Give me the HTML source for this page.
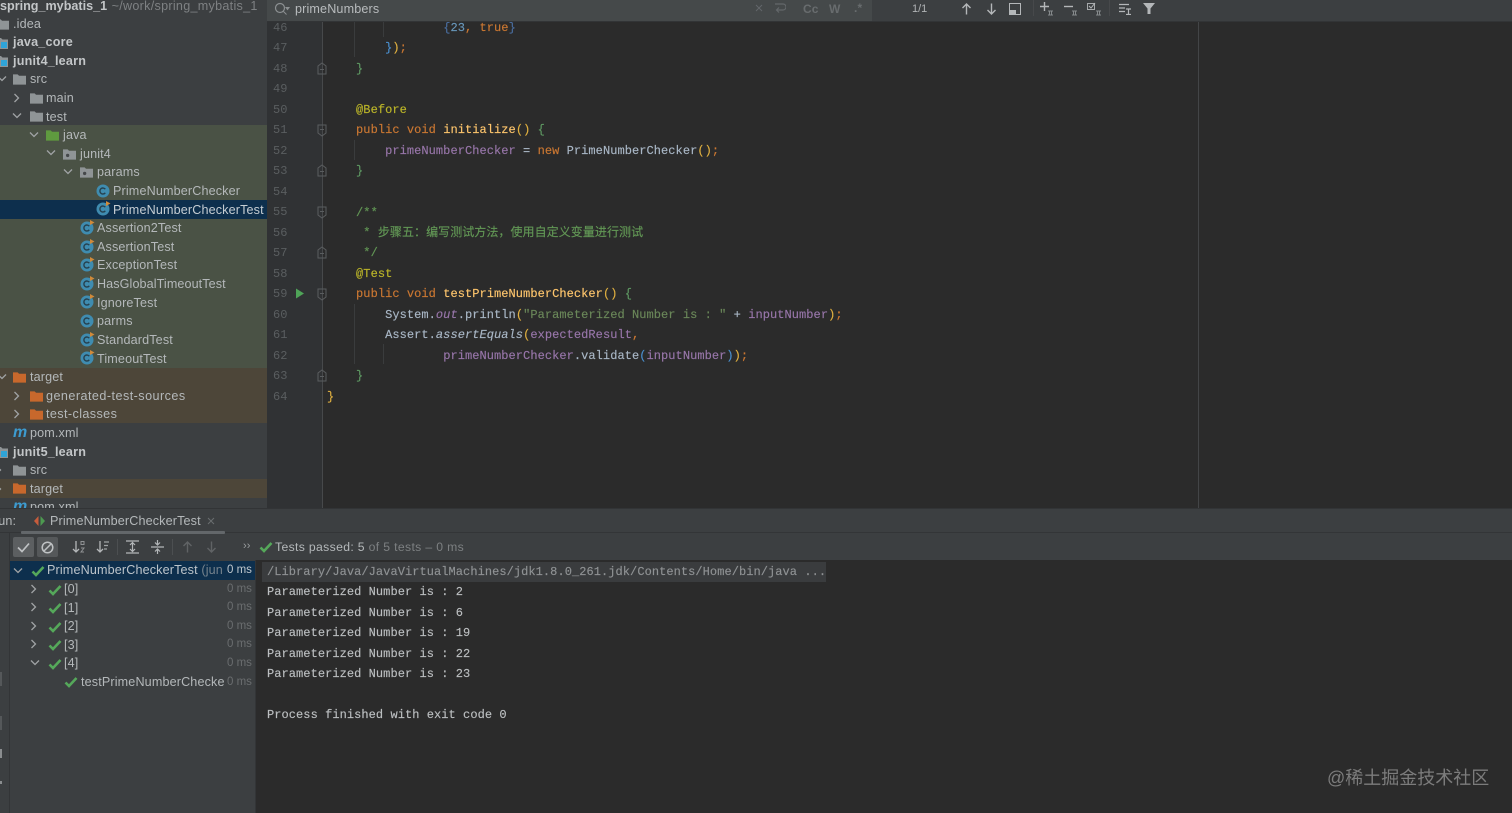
<!DOCTYPE html>
<html lang="zh">
<head>
<meta charset="utf-8">
<title>PrimeNumberCheckerTest</title>
<style>
html,body{margin:0;padding:0;background:#2b2b2b}
#p{position:relative;width:1512px;height:813px;overflow:hidden;background:#2b2b2b;font-family:"Liberation Sans","Noto Sans CJK SC",sans-serif;filter:blur(.35px)}
#p div,#p svg{position:absolute}
.b{left:0}
.t{white-space:nowrap;font-size:12.6px;letter-spacing:.14px;line-height:18px;color:#b4b8ba;height:18px}
.h{font-weight:bold;color:#c3c6c8;letter-spacing:.2px}
.g{color:#7e8183;letter-spacing:.28px}
.m{white-space:pre;font-family:"Liberation Mono","Noto Sans CJK SC",monospace;font-size:12px;letter-spacing:.06px;line-height:20px;height:20px;color:#a9b7c6;-webkit-text-stroke:.15px currentColor}
.n{font-family:"Liberation Mono",monospace;font-size:12px;line-height:20px;color:#5a5e60;left:273px}
.c{left:267px;color:#bcbfc1}
.k{color:#cc7832}.f{color:#ffc66d}.v{color:#9876aa}.a{color:#bbb529}.d{color:#629755}.s{color:#6a8759}
.gr{color:#5f9a63}.y{color:#e0b040}.bl{color:#4a90d0}.i{font-style:italic}
.ms{font-size:11.5px;line-height:18px;color:#6a6d6f;left:227px;white-space:nowrap;height:18px}
</style>
</head>
<body>
<div id="p">
<svg width="0" height="0" style="position:absolute">
<defs>
<symbol id="fo" viewBox="0 0 14 12"><path d="M0 1h5l1.500 1.500H14V12H0z" fill="currentColor"/></symbol>
<symbol id="pk" viewBox="0 0 14 12"><path d="M0 1h5l1.500 1.500H14V12H0z" fill="#8f9496"/><circle cx="5" cy="7.500" r="1.800" fill="#45484a"/></symbol>
<symbol id="mo" viewBox="0 0 16 15"><path d="M0 3h5l1.500 1.500H12V14H0z" fill="#8f9496"/><rect x="5" y="7" width="6" height="6" fill="#2fa4d8"/></symbol>
<symbol id="cl" viewBox="0 0 15 15"><circle cx="7" cy="8" r="6.500" fill="#3f8cb0"/><path d="M9.300 6.200A3 3 0 1 0 9.300 9.800" fill="none" stroke="#26404e" stroke-width="1.400"/></symbol>
<symbol id="ct" viewBox="0 0 15 15"><circle cx="7" cy="8" r="6.500" fill="#3f8cb0"/><path d="M9.300 6.200A3 3 0 1 0 9.300 9.800" fill="none" stroke="#26404e" stroke-width="1.400"/><path d="M10 0l4.500 2.500L10 5z" fill="#d08a3a"/></symbol>
<symbol id="ok" viewBox="0 0 14 12"><path d="M1.500 6.500L5 10l7.500-8" fill="none" stroke="#55a85a" stroke-width="2.600"/></symbol>
<symbol id="r" viewBox="0 0 8 10"><path d="M1.500 1l4 4-4 4" fill="none" stroke="#a0a3a5" stroke-width="1.300"/></symbol>
<symbol id="e" viewBox="0 0 10 8"><path d="M1 1.500l4 4 4-4" fill="none" stroke="#a0a3a5" stroke-width="1.300"/></symbol>
<symbol id="fe" viewBox="0 0 10 13"><path d="M1 1h8v8l-4 3-4-3z M3 5.500h4" fill="none" stroke="#5a5d5f"/></symbol>
<symbol id="fc" viewBox="0 0 10 13"><path d="M1 12h8V4L5 1 1 4z M3 7.500h4" fill="none" stroke="#5a5d5f"/></symbol>
</defs>
</svg>

<!-- sidebar -->
<div style="left:0;top:0;width:267px;height:508px;background:#3c3f41"></div>
<div style="left:0;top:125px;width:267px;height:243px;background:#4a5245"></div>
<div style="left:0;top:368px;width:267px;height:55px;background:#4d4639"></div>
<div style="left:0;top:479px;width:267px;height:19px;background:#4d4639"></div>
<div style="left:0;top:200px;width:267px;height:19px;background:#0d2f4d"></div>

<div class="t h" style="left:0;top:-3px;letter-spacing:0">spring_mybatis_1 <span class="g" style="font-weight:normal;margin-left:1px">~/work/spring_mybatis_1</span></div>
<svg style="left:-4px;top:18px;color:#8f9496" width="13" height="12"><use href="#fo"/></svg>
<div class="t" style="left:13px;top:15px">.idea</div>
<svg style="left:-4px;top:35px" width="16" height="15"><use href="#mo"/></svg>
<div class="t h" style="left:13px;top:33px">java_core</div>
<svg style="left:-4px;top:53px" width="16" height="15"><use href="#mo"/></svg>
<div class="t h" style="left:13px;top:52px">junit4_learn</div>
<svg style="left:-3px;top:75px" width="10" height="8"><use href="#e"/></svg>
<svg style="left:13px;top:73px;color:#8f9496" width="13" height="12"><use href="#fo"/></svg>
<div class="t" style="left:30px;top:70px">src</div>
<svg style="left:13px;top:93px" width="8" height="10"><use href="#r"/></svg>
<svg style="left:30px;top:92px;color:#8f9496" width="13" height="12"><use href="#fo"/></svg>
<div class="t" style="left:46px;top:89px">main</div>
<svg style="left:12px;top:112px" width="10" height="8"><use href="#e"/></svg>
<svg style="left:30px;top:110px;color:#8f9496" width="13" height="12"><use href="#fo"/></svg>
<div class="t" style="left:46px;top:108px">test</div>
<svg style="left:29px;top:131px" width="10" height="8"><use href="#e"/></svg>
<svg style="left:46px;top:129px;color:#5f9a3f" width="13" height="12"><use href="#fo"/></svg>
<div class="t" style="left:63px;top:126px">java</div>
<svg style="left:46px;top:149px" width="10" height="8"><use href="#e"/></svg>
<svg style="left:63px;top:148px" width="13" height="12"><use href="#pk"/></svg>
<div class="t" style="left:80px;top:145px">junit4</div>
<svg style="left:63px;top:168px" width="10" height="8"><use href="#e"/></svg>
<svg style="left:80px;top:166px" width="13" height="12"><use href="#pk"/></svg>
<div class="t" style="left:97px;top:163px">params</div>
<svg style="left:96px;top:183px" width="15" height="15"><use href="#cl"/></svg>
<div class="t" style="left:113px;top:182px">PrimeNumberChecker</div>
<svg style="left:96px;top:201px" width="15" height="15"><use href="#ct"/></svg>
<div class="t" style="left:113px;top:201px;color:#c5cdd3">PrimeNumberCheckerTest</div>
<svg style="left:80px;top:220px" width="15" height="15"><use href="#ct"/></svg>
<div class="t" style="left:97px;top:219px">Assertion2Test</div>
<svg style="left:80px;top:239px" width="15" height="15"><use href="#ct"/></svg>
<div class="t" style="left:97px;top:238px">AssertionTest</div>
<svg style="left:80px;top:257px" width="15" height="15"><use href="#ct"/></svg>
<div class="t" style="left:97px;top:256px">ExceptionTest</div>
<svg style="left:80px;top:276px" width="15" height="15"><use href="#ct"/></svg>
<div class="t" style="left:97px;top:275px;letter-spacing:.09px">HasGlobalTimeoutTest</div>
<svg style="left:80px;top:294px" width="15" height="15"><use href="#ct"/></svg>
<div class="t" style="left:97px;top:294px">IgnoreTest</div>
<svg style="left:80px;top:313px" width="15" height="15"><use href="#cl"/></svg>
<div class="t" style="left:97px;top:312px">parms</div>
<svg style="left:80px;top:332px" width="15" height="15"><use href="#ct"/></svg>
<div class="t" style="left:97px;top:331px">StandardTest</div>
<svg style="left:80px;top:350px" width="15" height="15"><use href="#ct"/></svg>
<div class="t" style="left:97px;top:350px">TimeoutTest</div>
<svg style="left:-3px;top:373px" width="10" height="8"><use href="#e"/></svg>
<svg style="left:13px;top:371px;color:#c8682c" width="13" height="12"><use href="#fo"/></svg>
<div class="t" style="left:30px;top:368px">target</div>
<svg style="left:13px;top:391px" width="8" height="10"><use href="#r"/></svg>
<svg style="left:30px;top:390px;color:#c8682c" width="13" height="12"><use href="#fo"/></svg>
<div class="t" style="left:46px;top:387px;letter-spacing:.46px">generated-test-sources</div>
<svg style="left:13px;top:409px" width="8" height="10"><use href="#r"/></svg>
<svg style="left:30px;top:408px;color:#c8682c" width="13" height="12"><use href="#fo"/></svg>
<div class="t" style="left:46px;top:405px;letter-spacing:.4px">test-classes</div>
<div class="t i" style="left:13px;top:424px;color:#3d9bd0;font-weight:bold;font-size:16px;font-style:italic">m</div>
<div class="t" style="left:30px;top:424px">pom.xml</div>
<svg style="left:-4px;top:444px" width="16" height="15"><use href="#mo"/></svg>
<div class="t h" style="left:13px;top:443px">junit5_learn</div>
<svg style="left:-5px;top:465px" width="8" height="10"><use href="#r"/></svg>
<svg style="left:13px;top:464px;color:#8f9496" width="13" height="12"><use href="#fo"/></svg>
<div class="t" style="left:30px;top:461px">src</div>
<svg style="left:-5px;top:484px" width="8" height="10"><use href="#r"/></svg>
<svg style="left:13px;top:482px;color:#c8682c" width="13" height="12"><use href="#fo"/></svg>
<div class="t" style="left:30px;top:480px">target</div>
<div style="left:0;top:498px;width:267px;height:10px;overflow:hidden">
  <div class="t" style="left:13px;top:0;color:#3d9bd0;font-weight:bold;font-size:16px;font-style:italic">m</div>
  <div class="t" style="left:30px;top:0">pom.xml</div>
</div>

<!-- gutter + editor -->
<div style="left:267px;top:21px;width:55px;height:487px;background:#303234"></div>
<div style="left:322px;top:21px;width:1px;height:487px;background:#47494b"></div>
<div style="left:1198px;top:21px;width:1px;height:487px;background:#434547"></div>

<div class="n" style="top:18px">46</div><div class="n" style="top:38px">47</div><div class="n" style="top:59px">48</div><div class="n" style="top:79px">49</div><div class="n" style="top:100px">50</div><div class="n" style="top:120px">51</div><div class="n" style="top:141px">52</div><div class="n" style="top:161px">53</div><div class="n" style="top:182px">54</div><div class="n" style="top:202px">55</div><div class="n" style="top:223px">56</div><div class="n" style="top:243px">57</div><div class="n" style="top:264px">58</div><div class="n" style="top:284px">59</div><div class="n" style="top:305px">60</div><div class="n" style="top:325px">61</div><div class="n" style="top:346px">62</div><div class="n" style="top:366px">63</div><div class="n" style="top:387px">64</div>

<svg style="left:317px;top:62px" width="10" height="13"><use href="#fc"/></svg>
<svg style="left:317px;top:124px" width="10" height="13"><use href="#fe"/></svg>
<svg style="left:317px;top:164px" width="10" height="13"><use href="#fc"/></svg>
<svg style="left:317px;top:206px" width="10" height="13"><use href="#fe"/></svg>
<svg style="left:317px;top:246px" width="10" height="13"><use href="#fc"/></svg>
<svg style="left:317px;top:288px" width="10" height="13"><use href="#fe"/></svg>
<svg style="left:317px;top:369px" width="10" height="13"><use href="#fc"/></svg>
<svg style="left:295px;top:288px" width="9" height="11"><path d="M1 0.500l8 5-8 5z" fill="#4fa458"/></svg>
<div style="left:354px;top:21px;width:1px;height:36px;background:#3a3c3d"></div>
<div style="left:383px;top:21px;width:1px;height:16px;background:#3a3c3d"></div>
<div style="left:354px;top:140px;width:1px;height:20px;background:#3a3c3d"></div>
<div style="left:354px;top:304px;width:1px;height:60px;background:#3a3c3d"></div>
<div style="left:383px;top:344px;width:1px;height:20px;background:#3a3c3d"></div>

<div class="m" style="left:327px;top:18px">                <span style="color:#4a6ea0">{</span><span style="color:#6897bb">23</span><span class="k">, true</span><span style="color:#4a6ea0">}</span></div>
<div class="m" style="left:327px;top:38px">        <span class="bl">}</span><span class="y">)</span><span class="k">;</span></div>
<div class="m" style="left:327px;top:59px">    <span class="gr">}</span></div>
<div class="m" style="left:327px;top:100px">    <span class="a">@Before</span></div>
<div class="m" style="left:327px;top:120px">    <span class="k">public void </span><span class="f">initialize</span><span class="y">()</span> <span class="gr">{</span></div>
<div class="m" style="left:327px;top:141px">        <span class="v">primeNumberChecker</span> = <span class="k">new </span>PrimeNumberChecker<span class="y">()</span><span class="k">;</span></div>
<div class="m" style="left:327px;top:161px">    <span class="gr">}</span></div>
<div class="m d" style="left:327px;top:203px">    /**</div>
<div class="m d" style="left:327px;top:223px">     * 步骤五&#xFF1A;编写测试方法&#xFF0C;使用自定义变量进行测试</div>
<div class="m d" style="left:327px;top:243px">     */</div>
<div class="m" style="left:327px;top:264px">    <span class="a">@Test</span></div>
<div class="m" style="left:327px;top:284px">    <span class="k">public void </span><span class="f">testPrimeNumberChecker</span><span class="y">()</span> <span class="gr">{</span></div>
<div class="m" style="left:327px;top:305px">        System.<span class="v i">out</span>.println<span class="y">(</span><span class="s">"Parameterized Number is : "</span> + <span class="v">inputNumber</span><span class="y">)</span><span class="k">;</span></div>
<div class="m" style="left:327px;top:325px">        Assert.<span class="i">assertEquals</span><span class="y">(</span><span class="v">expectedResult</span><span class="k">,</span></div>
<div class="m" style="left:327px;top:346px">                <span class="v">primeNumberChecker</span>.validate<span class="bl">(</span><span class="v">inputNumber</span><span class="bl">)</span><span class="y">)</span><span class="k">;</span></div>
<div class="m" style="left:327px;top:366px">    <span class="gr">}</span></div>
<div class="m" style="left:327px;top:387px"><span class="y">}</span></div>

<!-- find bar -->
<div style="left:267px;top:0;width:1245px;height:21px;background:#3c3f41;border-bottom:1px solid #323436"></div>
<div style="left:267px;top:0;width:605px;height:21px;background:#45494a"></div>
<svg style="left:274px;top:2px" width="16" height="14"><circle cx="6" cy="6" r="4.500" fill="none" stroke="#8c9092" stroke-width="1.200"/><path d="M9.500 9.500l3 3M12 5.500h3l-1.500 2z" stroke="#8c9092" fill="#8c9092"/></svg>
<div class="t" style="left:295px;top:0;color:#b8bbbd;font-size:12.6px">primeNumbers</div>
<svg style="left:755px;top:4px" width="8" height="8"><path d="M1 1l6 6M7 1L1 7" stroke="#63676a"/></svg>
<svg style="left:773px;top:3px" width="13" height="11"><path d="M2 1h8a2 2 0 0 1 0 6H4M6 4.500L3.500 7 6 9.500" fill="none" stroke="#63676a" stroke-width="1.200"/></svg>
<div class="t" style="left:803px;top:0;color:#686c6e;font-weight:bold;font-size:12px">Cc</div>
<div class="t" style="left:829px;top:0;color:#686c6e;font-weight:bold;font-size:12px">W</div>
<div class="t" style="left:854px;top:-1px;color:#686c6e;font-weight:bold;font-size:12px">.*</div>
<div class="t" style="left:912px;top:0;color:#b0b3b5;font-size:11px;letter-spacing:0">1/1</div>
<svg style="left:961px;top:3px" width="11" height="12"><path d="M5.500 11.500V1M1.500 5l4-4 4 4" fill="none" stroke="#b4b7b9" stroke-width="1.400"/></svg>
<svg style="left:986px;top:3px" width="11" height="12"><path d="M5.500 0.500V11M1.500 7l4 4 4-4" fill="none" stroke="#b4b7b9" stroke-width="1.400"/></svg>
<svg style="left:1009px;top:3px" width="12" height="12"><rect x=".5" y=".5" width="11" height="11" fill="none" stroke="#b4b7b9"/><rect x="1" y="7" width="6" height="4" fill="#b4b7b9"/></svg>
<svg style="left:1039px;top:2px" width="16" height="14"><path d="M5.500 0v9M1 4.500h9" stroke="#b4b7b9" stroke-width="1.400"/><path d="M9 9h5M9 13h5M10.500 9v4M12.500 9v4" stroke="#85898b" fill="none"/></svg>
<svg style="left:1063px;top:2px" width="16" height="14"><path d="M1 4.500h9" stroke="#b4b7b9" stroke-width="1.400"/><path d="M9 9h5M9 13h5M10.500 9v4M12.500 9v4" stroke="#85898b" fill="none"/></svg>
<svg style="left:1087px;top:2px" width="16" height="14"><rect x=".5" y="1.500" width="7" height="6" fill="none" stroke="#a6a9ab"/><path d="M2 4l2 2 4-5" fill="none" stroke="#b4b7b9"/><path d="M9 9h5M9 13h5M10.500 9v4M12.500 9v4" stroke="#85898b" fill="none"/></svg>
<div style="left:1033px;top:0;width:1px;height:16px;background:#47494b"></div>
<div style="left:1109px;top:0;width:1px;height:16px;background:#47494b"></div>
<svg style="left:1119px;top:3px" width="13" height="12"><path d="M0 1.500h10M0 5h6M0 8.500h6M7 6h5M7 11.500h5M9.500 6v5.500" stroke="#b4b7b9" fill="none" stroke-width="1.200"/></svg>
<svg style="left:1143px;top:3px" width="12" height="11"><path d="M0 0h12L7.500 5.500V11h-3V5.500z" fill="#b4b7b9"/></svg>

<!-- run panel -->
<div style="left:0;top:508px;width:1512px;height:52px;background:#3c3f41;border-top:1px solid #323436"></div>
<div style="left:0;top:532px;width:1512px;height:1px;background:#333537"></div>
<div style="left:0;top:533px;width:255px;height:280px;background:#3c3f41"></div>
<div style="left:9px;top:533px;width:1px;height:280px;background:#333537"></div>
<div style="left:255px;top:560px;width:1px;height:253px;background:#333537"></div>
<div style="left:256px;top:560px;width:1256px;height:253px;background:#2b2b2b"></div>

<div class="t" style="left:-11px;top:512px">Run:</div>
<svg style="left:33px;top:515px" width="13" height="12"><path d="M5.500 1L1 6l4.500 5z" fill="#c75c3c"/><path d="M7.500 1L12 6l-4.500 5z" fill="#4d9a50"/></svg>
<div class="t" style="left:50px;top:512px">PrimeNumberCheckerTest</div>
<svg style="left:207px;top:517px" width="8" height="8"><path d="M1 1l6 6M7 1L1 7" stroke="#6a6d6f"/></svg>
<div style="left:21px;top:531px;width:204px;height:3px;background:#63676a;border-radius:1px"></div>

<div style="left:13px;top:537px;width:21px;height:20px;background:#5c5f61;border-radius:2px"></div>
<div style="left:37px;top:537px;width:21px;height:20px;background:#55585a;border-radius:2px"></div>
<svg style="left:17px;top:542px" width="13" height="11"><path d="M1 5.500l4 4 7-8" fill="none" stroke="#bfc2c4" stroke-width="1.700"/></svg>
<svg style="left:41px;top:541px" width="13" height="13"><circle cx="6.500" cy="6.500" r="5.300" fill="none" stroke="#bfc2c4" stroke-width="1.500"/><path d="M3 10l7-7" stroke="#bfc2c4" stroke-width="1.500"/></svg>
<svg style="left:72px;top:540px" width="13" height="14"><path d="M4 1v11M1 9l3 3 3-3" fill="none" stroke="#b4b7b9" stroke-width="1.300"/><path d="M9 1.500h3v3H9zM9 8h3l-3 4h3" fill="none" stroke="#8f9294"/></svg>
<svg style="left:96px;top:540px" width="14" height="14"><path d="M4 1v11M1 9l3 3 3-3" fill="none" stroke="#b4b7b9" stroke-width="1.300"/><path d="M8 2h5M8 5.500h4M8 9h3" stroke="#a0a3a5" stroke-width="1.200"/></svg>
<div style="left:117px;top:539px;width:1px;height:16px;background:#4c4f51"></div>
<svg style="left:126px;top:540px" width="13" height="14"><path d="M0 1h13M0 13h13M6.500 3v8M4 5l2.500-2.500L9 5M4 9l2.500 2.500L9 9" fill="none" stroke="#b4b7b9" stroke-width="1.200"/></svg>
<svg style="left:151px;top:540px" width="13" height="14"><path d="M0 7h13M6.500 0v5M6.500 14V9M4 2.500l2.500 2.500L9 2.500M4 11.500L6.500 9 9 11.500" fill="none" stroke="#b4b7b9" stroke-width="1.200"/></svg>
<div style="left:172px;top:539px;width:1px;height:16px;background:#4c4f51"></div>
<svg style="left:182px;top:541px" width="11" height="12"><path d="M5.500 11.500V1M1.500 5l4-4 4 4" fill="none" stroke="#606365" stroke-width="1.400"/></svg>
<svg style="left:206px;top:541px" width="11" height="12"><path d="M5.500 0.500V11M1.500 7l4 4 4-4" fill="none" stroke="#606365" stroke-width="1.400"/></svg>
<div class="t" style="left:243px;top:537px;color:#9a9d9f;font-size:11px">››</div>
<svg style="left:259px;top:541px" width="14" height="12"><use href="#ok"/></svg>
<div class="t" style="left:275px;top:538px;font-size:12.2px;letter-spacing:.35px">Tests passed: 5 <span style="color:#7d8082">of 5 tests – 0 ms</span></div>

<div style="left:10px;top:561px;width:245px;height:19px;background:#0d2f4d"></div>
<svg style="left:13px;top:567px" width="10" height="8"><use href="#e"/></svg>
<svg style="left:31px;top:565px" width="14" height="12"><use href="#ok"/></svg>
<div class="t" style="left:47px;top:561px;color:#bcc4ca">PrimeNumberCheckerTest <span style="color:#75828c">(jun</span></div>
<div style="left:224px;top:561px;width:31px;height:19px;background:#0d2f4d"></div>
<div class="ms" style="top:561px;color:#c0c8ce">0 ms</div>

<svg style="left:30px;top:584px" width="8" height="10"><use href="#r"/></svg>
<svg style="left:48px;top:584px" width="14" height="12"><use href="#ok"/></svg>
<div class="t" style="left:64px;top:580px">[0]</div><div class="ms" style="top:580px">0 ms</div>
<svg style="left:30px;top:602px" width="8" height="10"><use href="#r"/></svg>
<svg style="left:48px;top:602px" width="14" height="12"><use href="#ok"/></svg>
<div class="t" style="left:64px;top:599px">[1]</div><div class="ms" style="top:598px">0 ms</div>
<svg style="left:30px;top:621px" width="8" height="10"><use href="#r"/></svg>
<svg style="left:48px;top:621px" width="14" height="12"><use href="#ok"/></svg>
<div class="t" style="left:64px;top:617px">[2]</div><div class="ms" style="top:617px">0 ms</div>
<svg style="left:30px;top:639px" width="8" height="10"><use href="#r"/></svg>
<svg style="left:48px;top:639px" width="14" height="12"><use href="#ok"/></svg>
<div class="t" style="left:64px;top:636px">[3]</div><div class="ms" style="top:635px">0 ms</div>
<svg style="left:30px;top:659px" width="10" height="8"><use href="#e"/></svg>
<svg style="left:48px;top:658px" width="14" height="12"><use href="#ok"/></svg>
<div class="t" style="left:64px;top:654px">[4]</div><div class="ms" style="top:654px">0 ms</div>
<svg style="left:64px;top:676px" width="14" height="12"><use href="#ok"/></svg>
<div style="left:81px;top:673px;width:144px;height:18px;overflow:hidden"><div class="t" style="left:0;top:0">testPrimeNumberChecker</div></div>
<div class="ms" style="top:673px">0 ms</div>

<div style="left:0;top:672px;width:2px;height:14px;background:#55585a"></div>
<div style="left:0;top:716px;width:2px;height:14px;background:#55585a"></div>
<div style="left:0;top:749px;width:2px;height:9px;background:#8a8d8f"></div>
<div style="left:0;top:781px;width:2px;height:3px;background:#8a8d8f"></div>

<!-- console -->
<div style="left:262px;top:562px;width:564px;height:20px;background:#3a3c3e"></div>
<div class="m c" style="top:562px;color:#8f9294">/Library/Java/JavaVirtualMachines/jdk1.8.0_261.jdk/Contents/Home/bin/java ...</div>
<div class="m c" style="top:582px">Parameterized Number is : 2</div>
<div class="m c" style="top:603px">Parameterized Number is : 6</div>
<div class="m c" style="top:623px">Parameterized Number is : 19</div>
<div class="m c" style="top:644px">Parameterized Number is : 22</div>
<div class="m c" style="top:664px">Parameterized Number is : 23</div>
<div class="m c" style="top:705px">Process finished with exit code 0</div>

<div style="left:1327px;top:766px;font-size:18px;line-height:24px;color:#7c7c7c;white-space:nowrap">@稀土掘金技术社区</div>
</div>
</body>
</html>
